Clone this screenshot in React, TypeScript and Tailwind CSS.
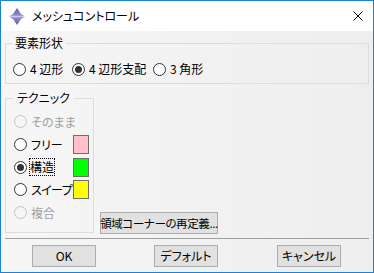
import React from "react";

function Radio({ checked = false, disabled = false }: { checked?: boolean; disabled?: boolean }) {
  return (
    <span
      className={
        disabled
          ? "w-[13px] h-[13px] rounded-full border border-[#c4c4c4] flex items-center justify-center shrink-0"
          : "w-[13px] h-[13px] rounded-full border border-[#333333] bg-white flex items-center justify-center shrink-0"
      }
    >
      {checked && <span className="w-[7px] h-[7px] rounded-full bg-[#333333]" />}
    </span>
  );
}

function Btn({ children, className = "" }: { children: React.ReactNode; className?: string }) {
  return (
    <div
      className={
        "h-[22px] border border-[#adadad] bg-[#e1e1e1] flex items-center justify-center whitespace-nowrap shrink-0 " +
        className
      }
    >
      {children}
    </div>
  );
}

export default function App() {
  return (
    <div className="w-[374px] h-[273px] border border-[#1883d7] flex flex-col bg-white text-black text-[12px] leading-[16px] whitespace-nowrap [font-feature-settings:'palt'] font-['Noto_Sans_CJK_JP',sans-serif]">
      {/* title bar */}
      <div className="h-[30px] flex items-center shrink-0">
        <svg className="ml-[8px]" width="16" height="17" viewBox="0 0 16 17">
          <defs>
            <linearGradient id="g" x1="0" y1="0" x2="0" y2="1">
              <stop offset="0" stopColor="#5c5ca8" />
              <stop offset="0.42" stopColor="#8c8cc8" />
              <stop offset="0.5" stopColor="#c8c8ec" />
              <stop offset="0.58" stopColor="#8c8cc8" />
              <stop offset="1" stopColor="#5c5ca8" />
            </linearGradient>
          </defs>
          <polygon points="8,0 12,6 16,8.5 12,11 8,17 4,11 0,8.5 4,6" fill="url(#g)" />
        </svg>
        <span className="ml-[7px]">メッシュコントロール</span>
        <svg className="ml-auto mr-[10px]" width="10" height="10" viewBox="0 0 10 10">
          <path d="M0.5 0.5 L9.5 9.5 M9.5 0.5 L0.5 9.5" stroke="#000" strokeWidth="1" />
        </svg>
      </div>

      {/* body */}
      <div className="flex-1 bg-gradient-to-r from-[#f6f6f6] to-[#eeeeee] px-[4px] pt-[4px] flex flex-col">
        <fieldset className="border border-[#dcdcdc] m-0 p-0">
          <legend className="ml-[6px] px-[3px] leading-[16px]">要素形状</legend>
          <div className="flex items-center pl-[7px] pt-[10px] pb-[6px]">
            <div className="w-[59px] flex items-center shrink-0">
              <Radio />
              <span className="ml-[4px]">4 辺形</span>
            </div>
            <div className="w-[81px] flex items-center shrink-0">
              <Radio checked />
              <span className="ml-[4px]">4 辺形支配</span>
            </div>
            <div className="flex items-center">
              <Radio />
              <span className="ml-[4px]">3 角形</span>
            </div>
          </div>
        </fieldset>

        <div className="flex items-end mt-[6px]">
          <fieldset className="w-[89px] shrink-0 border border-[#dcdcdc] m-0 p-0">
            <legend className="ml-[7px] px-[4px] leading-[16px]">テクニック</legend>
            <div className="flex flex-col pl-[8px] pr-[4px] pt-[4px] pb-[8px]">
              <div className="h-[23px] flex items-center">
                <Radio disabled />
                <span className="ml-[4px] text-[#a0a0a0]">そのまま</span>
              </div>
              <div className="h-[23px] flex items-center">
                <Radio />
                <span className="ml-[4px]">フリー</span>
                <span className="ml-auto shrink-0 w-[16px] h-[19px] border border-[#6e6e6e] bg-[#ffc0cb]" />
              </div>
              <div className="h-[22px] flex items-center">
                <Radio checked />
                <span className="ml-[2px] border border-dotted border-black leading-[16px]">構造</span>
                <span className="ml-auto shrink-0 w-[16px] h-[19px] border border-[#6e6e6e] bg-[#00ff00]" />
              </div>
              <div className="h-[23px] flex items-center">
                <Radio />
                <span className="ml-[4px] tracking-[-0.6px]">スイープ</span>
                <span className="ml-auto shrink-0 w-[16px] h-[19px] border border-[#6e6e6e] bg-[#ffff00]" />
              </div>
              <div className="h-[23px] flex items-center">
                <Radio disabled />
                <span className="ml-[4px] text-[#a0a0a0]">複合</span>
              </div>
            </div>
          </fieldset>
          <Btn className="ml-[6px] w-[118px] mb-[-1px] text-[11.5px] tracking-[-0.4px]">領域コーナーの再定義...</Btn>
        </div>

        <div className="mt-[5px] h-px bg-[#a0a0a0]" />

        <div className="flex mt-[6px] pl-[27px]">
          <Btn className="w-[64px]">OK</Btn>
          <Btn className="w-[64px] ml-[58px]">デフォルト</Btn>
          <Btn className="w-[64px] ml-[59px]">キャンセル</Btn>
        </div>
      </div>
    </div>
  );
}
